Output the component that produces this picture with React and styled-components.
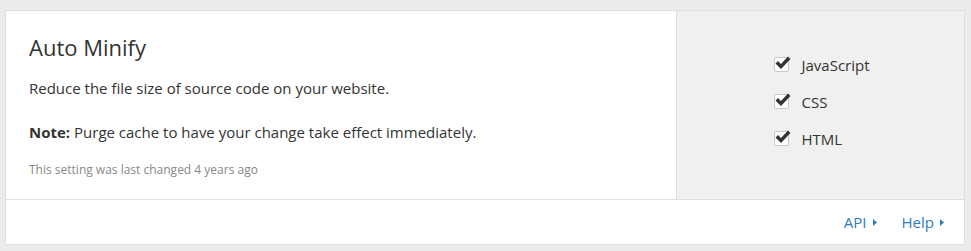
import React from "react";
import styled, { createGlobalStyle } from "styled-components";

const GlobalStyle = createGlobalStyle`
  html, body {
    margin: 0;
    padding: 0;
    background: #ebebeb;
  }
  body {
    font-family: "Open Sans", "Liberation Sans", sans-serif;
    color: #333;
  }
`;

const Page = styled.div`
  padding: 10px 6px 7px 5px;
`;

const Card = styled.section`
  background: #fff;
  border: 1px solid #dedede;
  display: flex;
  flex-direction: column;
`;

const Body = styled.div`
  display: flex;
  height: 188px;
  border-bottom: 1px solid #dedede;
`;

const Main = styled.div`
  flex: 1;
  padding: 21px 23px 0 23px;
`;

const Title = styled.h3`
  margin: 0 0 14px;
  font-size: 22px;
  font-weight: 400;
  line-height: 30px;
  color: #333;
`;

const Text = styled.p`
  margin: 0 0 ${(p) => p.$gap ?? 20}px;
  font-size: 15px;
  line-height: 24px;
  color: #333;
  strong {
    font-weight: 700;
  }
`;

const Meta = styled.p`
  margin: 0;
  font-size: 12px;
  line-height: 18px;
  color: #888;
`;

const Aside = styled.div`
  width: 287px;
  background: #f0f0f0;
  border-left: 1px solid #dedede;
  display: flex;
  align-items: center;
  justify-content: center;
`;

const List = styled.div`
  display: flex;
  flex-direction: column;
  gap: 13px;
  margin: -7px 0 0 3px;
`;

const Option = styled.label`
  display: flex;
  align-items: center;
  gap: 12px;
  font-size: 15px;
  line-height: 24px;
  color: #333;
`;

const Box = styled.span`
  position: relative;
  width: 13px;
  height: 13px;
  border: 1px solid #c8c8c8;
  border-radius: 2px;
  background: #fff;
  svg {
    position: absolute;
    left: -1px;
    top: -3px;
  }
`;

const Footer = styled.div`
  height: 44px;
  display: flex;
  align-items: center;
  justify-content: flex-end;
  gap: 25px;
  padding-right: 20px;
`;

const FooterLink = styled.a`
  display: flex;
  align-items: center;
  gap: 6px;
  font-size: 15px;
  color: #2f7bbf;
  text-decoration: none;
`;

const Caret = () => (
  <svg width="4" height="7" viewBox="0 0 4 7">
    <path d="M0 0 L4 3.5 L0 7 Z" fill="#2f7bbf" />
  </svg>
);

const Check = () => (
  <svg width="17" height="15" viewBox="0 0 17 15">
    <path
      d="M1.5 8.5 L4 6 L7 9 L14 1.5 L16.5 4 L7 14 Z"
      fill="#333"
    />
  </svg>
);

const options = ["JavaScript", "CSS", "HTML"];

export default function App() {
  return (
    <>
      <GlobalStyle />
      <Page>
        <Card>
          <Body>
            <Main>
              <Title>Auto Minify</Title>
              <Text>Reduce the file size of source code on your website.</Text>
              <Text $gap={17}>
                <strong>Note:</strong> Purge cache to have your change take effect immediately.
              </Text>
              <Meta>This setting was last changed 4 years ago</Meta>
            </Main>
            <Aside>
              <List>
                {options.map((o) => (
                  <Option key={o}>
                    <Box>
                      <Check />
                    </Box>
                    {o}
                  </Option>
                ))}
              </List>
            </Aside>
          </Body>
          <Footer>
            <FooterLink href="#">
              API <Caret />
            </FooterLink>
            <FooterLink href="#">
              Help <Caret />
            </FooterLink>
          </Footer>
        </Card>
      </Page>
    </>
  );
}
